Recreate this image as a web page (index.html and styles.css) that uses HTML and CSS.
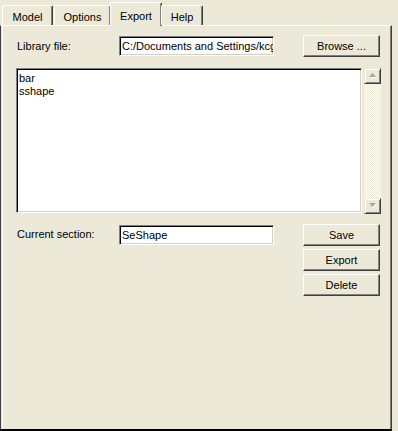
FILE: index.html
```html
<!DOCTYPE html>
<html>
<head>
<meta charset="utf-8">
<link rel="stylesheet" href="styles.css">
</head>
<body>
<div class="frame">
  <div class="tabs">
    <div class="tab t-model">Model</div>
    <div class="tab t-options">Options</div>
    <div class="tab t-export active">Export</div>
    <div class="tab t-help">Help</div>
  </div>
  <div class="panel">
    <div class="row row-lib">
      <span class="lbl">Library file:</span>
      <div class="field">C:/Documents and Settings/kcg</div>
      <button class="btn">Browse ...</button>
    </div>
    <div class="listarea">
      <div class="listbox">
        <div class="item">bar</div>
        <div class="item">sshape</div>
      </div>
      <div class="vscroll">
        <div class="sbtn">
          <svg width="8" height="6" viewBox="0 0 8 6"><polygon points="3.5,0 7,4 0,4" fill="#fff" transform="translate(1,1)"/><polygon points="3.5,0 7,4 0,4" fill="#ACA899"/></svg>
        </div>
        <div class="track"></div>
        <div class="sbtn">
          <svg width="8" height="6" viewBox="0 0 8 6"><polygon points="0,0 7,0 3.5,4" fill="#fff" transform="translate(1,1)"/><polygon points="0,0 7,0 3.5,4" fill="#ACA899"/></svg>
        </div>
      </div>
    </div>
    <div class="row row-cur">
      <span class="lbl">Current section:</span>
      <div class="field">SeShape</div>
      <div class="btncol">
        <button class="btn">Save</button>
        <button class="btn">Export</button>
        <button class="btn">Delete</button>
      </div>
    </div>
  </div>
</div>
</body>
</html>
```
FILE: styles.css
```css
* { box-sizing: border-box; }
html, body { margin: 0; padding: 0; }
body {
  background: #ECE9D8;
  font-family: "Liberation Sans", Arial, sans-serif;
  font-size: 11px;
  font-weight: 400;
  color: #000;
  width: 398px;
  height: 431px;
  overflow: hidden;
}
.frame {
  width: 398px;
  height: 431px;
  display: flex;
  flex-direction: column;
}
.tabs {
  display: flex;
  align-items: flex-end;
  height: 25px;
  padding-left: 2px;
  position: relative;
  z-index: 2;
}
.tab {
  height: 20px;
  border-top: 1px solid #fff;
  border-left: 1px solid #fff;
  border-right: 1px solid #404040;
  border-radius: 2px 2px 0 0;
  box-shadow: inset -1px 0 0 #808080;
  text-align: center;
  line-height: 13px;
  padding-top: 5px;
  background: #ECE9D8;
}
.t-model { width: 51px; }
.t-options { width: 57px; margin-left: 1px; }
.t-export { width: 52px; }
.t-help { width: 42px; }
.tab.active {
  height: 24px;
  margin-left: -1px;
  margin-right: -1px;
  margin-bottom: -1px;
  padding-top: 7px;
}
.panel {
  width: 392px;
  height: 406px;
  border-top: 1px solid #fff;
  border-left: 1px solid #404040;
  border-right: 1px solid #404040;
  border-bottom: 2px solid #000;
  box-shadow: inset 1px 0 0 #ECE9D8, inset 2px 0 0 #fff, inset -1px 0 0 #808080;
  padding: 9px 0 0 15px;
}
.row {
  display: flex;
  align-items: center;
}
.row-lib { height: 22px; }
.row-cur { align-items: flex-start; margin-top: 11px; }
.lbl {
  width: 103px;
  padding-left: 1px;
}
.row-cur .lbl { padding-top: 4px; }
.field {
  width: 155px;
  height: 20px;
  background: #fff;
  border-top: 1px solid #808080;
  border-left: 1px solid #808080;
  border-right: 1px solid #fff;
  border-bottom: 1px solid #fff;
  box-shadow: inset 1px 1px 0 #000, inset -1px -1px 0 #D4D0C8;
  padding: 3px 0 0 2px;
  line-height: 13px;
  white-space: nowrap;
  overflow: hidden;
  margin-right: 29px;
}
.row-cur .field { margin-top: 1px; }
.btn {
  width: 77px;
  height: 22px;
  padding: 0;
  margin: 0;
  font-family: "Liberation Sans", Arial, sans-serif;
  font-size: 11px;
  font-weight: 400;
  color: #000;
  background: #ECE9D8;
  border-top: 1px solid #fff;
  border-left: 1px solid #fff;
  border-right: 1px solid #404040;
  border-bottom: 1px solid #404040;
  box-shadow: inset -1px -1px 0 #808080;
  border-radius: 0;
  line-height: 18px;
}
.btncol {
  display: flex;
  flex-direction: column;
  gap: 3px;
}
.listarea {
  display: flex;
  margin-top: 11px;
  height: 145px;
  gap: 2px;
}
.listbox {
  width: 346px;
  height: 145px;
  background: #fff;
  border-top: 1px solid #808080;
  border-left: 1px solid #808080;
  border-right: 1px solid #fff;
  border-bottom: 1px solid #fff;
  box-shadow: inset 1px 1px 0 #000, inset -1px -1px 0 #D4D0C8;
  padding: 3px 0 0 2px;
}
.item {
  line-height: 13px;
  height: 13px;
}
.vscroll {
  width: 17px;
  height: 146px;
  display: flex;
  flex-direction: column;
}
.sbtn {
  height: 16px;
  background: #ECE9D8;
  border-top: 1px solid #ECE9D8;
  border-left: 1px solid #ECE9D8;
  border-right: 1px solid #404040;
  border-bottom: 1px solid #404040;
  box-shadow: inset 1px 1px 0 #fff, inset -1px -1px 0 #808080;
  display: flex;
  align-items: center;
  justify-content: center;
}
.sbtn svg { display: block; }
.track {
  flex: 1;
  background-color: #ECE9D8;
  background-image: conic-gradient(#fff 0 25%, #ECE9D8 0 50%, #fff 0 75%, #ECE9D8 0);
  background-size: 2px 2px;
}
```
